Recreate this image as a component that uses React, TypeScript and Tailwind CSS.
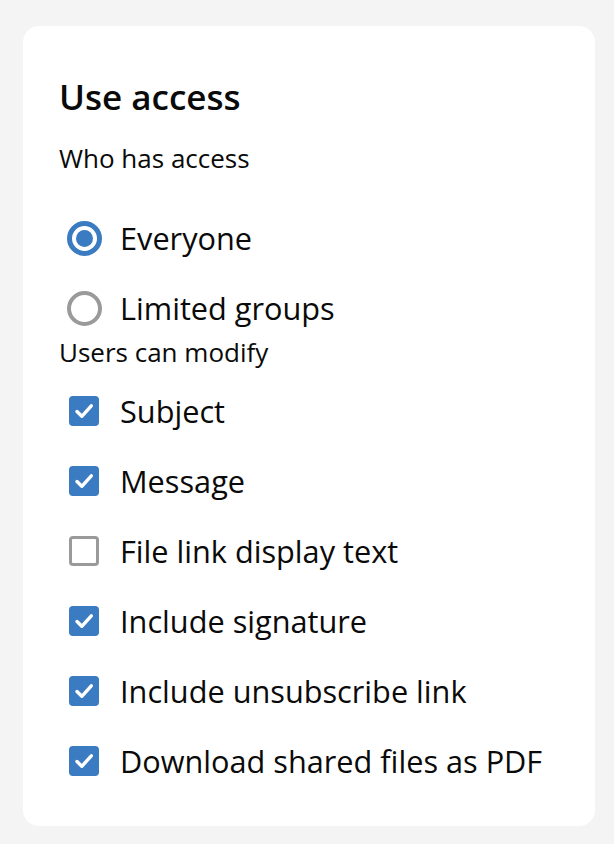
import { useState } from "react";

const modifyOptions = [
  { label: "Subject", checked: true },
  { label: "Message", checked: true },
  { label: "File link display text", checked: false },
  { label: "Include signature", checked: true },
  { label: "Include unsubscribe link", checked: true },
  { label: "Download shared files as PDF", checked: true },
];

function Radio({ checked }: { checked: boolean }) {
  return checked ? (
    <span className="flex h-[35px] w-[35px] shrink-0 items-center justify-center rounded-full border-[5px] border-[#3a7bc1]">
      <span className="h-[17px] w-[17px] rounded-full bg-[#3a7bc1]" />
    </span>
  ) : (
    <span className="h-[35px] w-[35px] shrink-0 rounded-full border-[4px] border-[#9a9a9a]" />
  );
}

function Checkbox({ checked }: { checked: boolean }) {
  return checked ? (
    <span className="flex h-[30px] w-[30px] shrink-0 items-center justify-center rounded-[4px] bg-[#3a7bc1]">
      <svg width="30" height="30" viewBox="0 0 30 30" fill="none">
        <path
          d="M8 15.5 L12.8 20.3 L22.3 9.8"
          stroke="white"
          strokeWidth="3.4"
          strokeLinecap="round"
          strokeLinejoin="round"
        />
      </svg>
    </span>
  ) : (
    <span className="h-[30px] w-[30px] shrink-0 rounded-[4px] border-[3px] border-[#9a9a9a]" />
  );
}

export default function App() {
  const [access, setAccess] = useState("everyone");
  const [opts, setOpts] = useState(modifyOptions);

  return (
    <div
      className="min-h-screen bg-[#f4f4f4] pt-[26px] pl-[23px] pr-[19px] pb-[17px] text-[#0a0a0a]"
      style={{ fontFamily: '"Open Sans", "Noto Sans", sans-serif' }}
    >
      <div className="rounded-[16px] bg-white pl-[36px] pr-6 pt-[51px] pb-[35px]">
        <h1 className="text-[35px] font-semibold leading-[40px]">Use access</h1>
        <p className="mt-[25px] text-[26px] leading-[32px]">Who has access</p>

        {/* who has access */}
        <div className="mt-[34px] flex flex-col gap-[10px]">
          {[
            { id: "everyone", label: "Everyone" },
            { id: "limited", label: "Limited groups" },
          ].map((o) => (
            <label
              key={o.id}
              onClick={() => setAccess(o.id)}
              className="flex h-[60px] cursor-pointer items-center gap-[18px] pl-[8px] text-[30.7px]"
            >
              <Radio checked={access === o.id} />
              {o.label}
            </label>
          ))}
        </div>

        <p className="text-[26px] leading-[28px]">Users can modify</p>

        {/* users can modify */}
        <div className="mt-[15px] flex flex-col gap-[10px]">
          {opts.map((o, i) => (
            <label
              key={o.label}
              onClick={() =>
                setOpts(opts.map((x, j) => (j === i ? { ...x, checked: !x.checked } : x)))
              }
              className="flex h-[60px] cursor-pointer items-center gap-[21px] pl-[10px] text-[30.7px]"
            >
              <Checkbox checked={o.checked} />
              {o.label}
            </label>
          ))}
        </div>
      </div>
    </div>
  );
}
